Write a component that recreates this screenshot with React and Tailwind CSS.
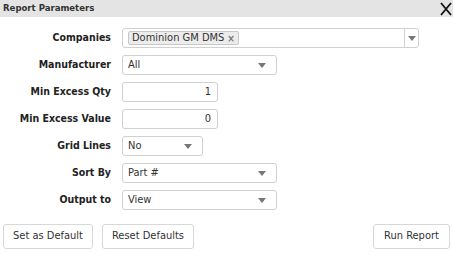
import React from "react";

function Caret() {
  return (
    <svg width="8" height="5" viewBox="0 0 8 5" className="shrink-0">
      <path d="M0 0 L8 0 L4 5 Z" fill="#777" />
    </svg>
  );
}

function Select({ value, width }) {
  return (
    <div
      className={`h-[20px] ${width} flex items-center justify-between pl-[5px] pr-[10px] border border-[#d0d0d0] rounded-[3px] bg-white text-[#333]`}
    >
      <span>{value}</span>
      <Caret />
    </div>
  );
}

function NumberInput({ value }) {
  return (
    <div className="h-[20px] w-[96px] flex items-center justify-end px-[6px] border border-[#d0d0d0] rounded-[3px] bg-white text-[#333]">
      {value}
    </div>
  );
}

function Row({ label, children }) {
  return (
    <div className="flex items-center h-[20px]">
      <div className="w-[111px] text-right font-bold text-[10.5px] text-[#222]">{label}</div>
      <div className="ml-[11px]">{children}</div>
    </div>
  );
}

export default function App() {
  return (
    <div className="w-[453px] h-[255px] bg-white text-[11px] flex flex-col [font-family:'DejaVu_Sans_Condensed','DejaVu_Sans',sans-serif]">
      <div className="h-[17px] bg-[#e4e4e4] flex items-center justify-between pl-[3px] pr-[1px]">
        <span className="text-[#333] font-bold text-[9.5px]">Report Parameters</span>
        <svg width="12" height="14" viewBox="0 0 12 14">
          <path d="M1 1 L11 13 M11 1 L1 13" stroke="#111" strokeWidth="1.8" />
        </svg>
      </div>

      <div className="flex flex-col gap-[7px] pt-[11px]">
        <Row label="Companies">
          <div className="h-[20px] w-[297px] flex items-center border border-[#d0d0d0] rounded-[3px] bg-white">
            <div className="flex-1 flex items-center pl-[5px]">
              <span className="h-[14px] flex items-center px-[3px] bg-[#ececec] border border-[#c8c8c8] rounded-[2px] text-[#333]">
                Dominion GM DMS
                <span className="ml-[3px] text-[#777] text-[10px] font-bold">×</span>
              </span>
            </div>
            <div className="w-[14px] h-full border-l border-[#d0d0d0] flex items-center justify-center">
              <Caret />
            </div>
          </div>
        </Row>
        <Row label="Manufacturer">
          <Select value="All" width="w-[155px]" />
        </Row>
        <Row label="Min Excess Qty">
          <NumberInput value="1" />
        </Row>
        <Row label="Min Excess Value">
          <NumberInput value="0" />
        </Row>
        <Row label="Grid Lines">
          <Select value="No" width="w-[81px]" />
        </Row>
        <Row label="Sort By">
          <Select value="Part #" width="w-[155px]" />
        </Row>
        <Row label="Output to">
          <Select value="View" width="w-[155px]" />
        </Row>
      </div>

      <div className="flex items-center justify-between px-[3px] mt-[14px]">
        <div className="flex gap-[9px]">
          <button className="h-[25px] w-[90px] border border-[#d8d8d8] rounded-[3px] bg-white text-[#333]">
            Set as Default
          </button>
          <button className="h-[25px] w-[92px] border border-[#d8d8d8] rounded-[3px] bg-white text-[#333]">
            Reset Defaults
          </button>
        </div>
        <button className="h-[25px] w-[77px] border border-[#d8d8d8] rounded-[3px] bg-white text-[#333]">
          Run Report
        </button>
      </div>
    </div>
  );
}
